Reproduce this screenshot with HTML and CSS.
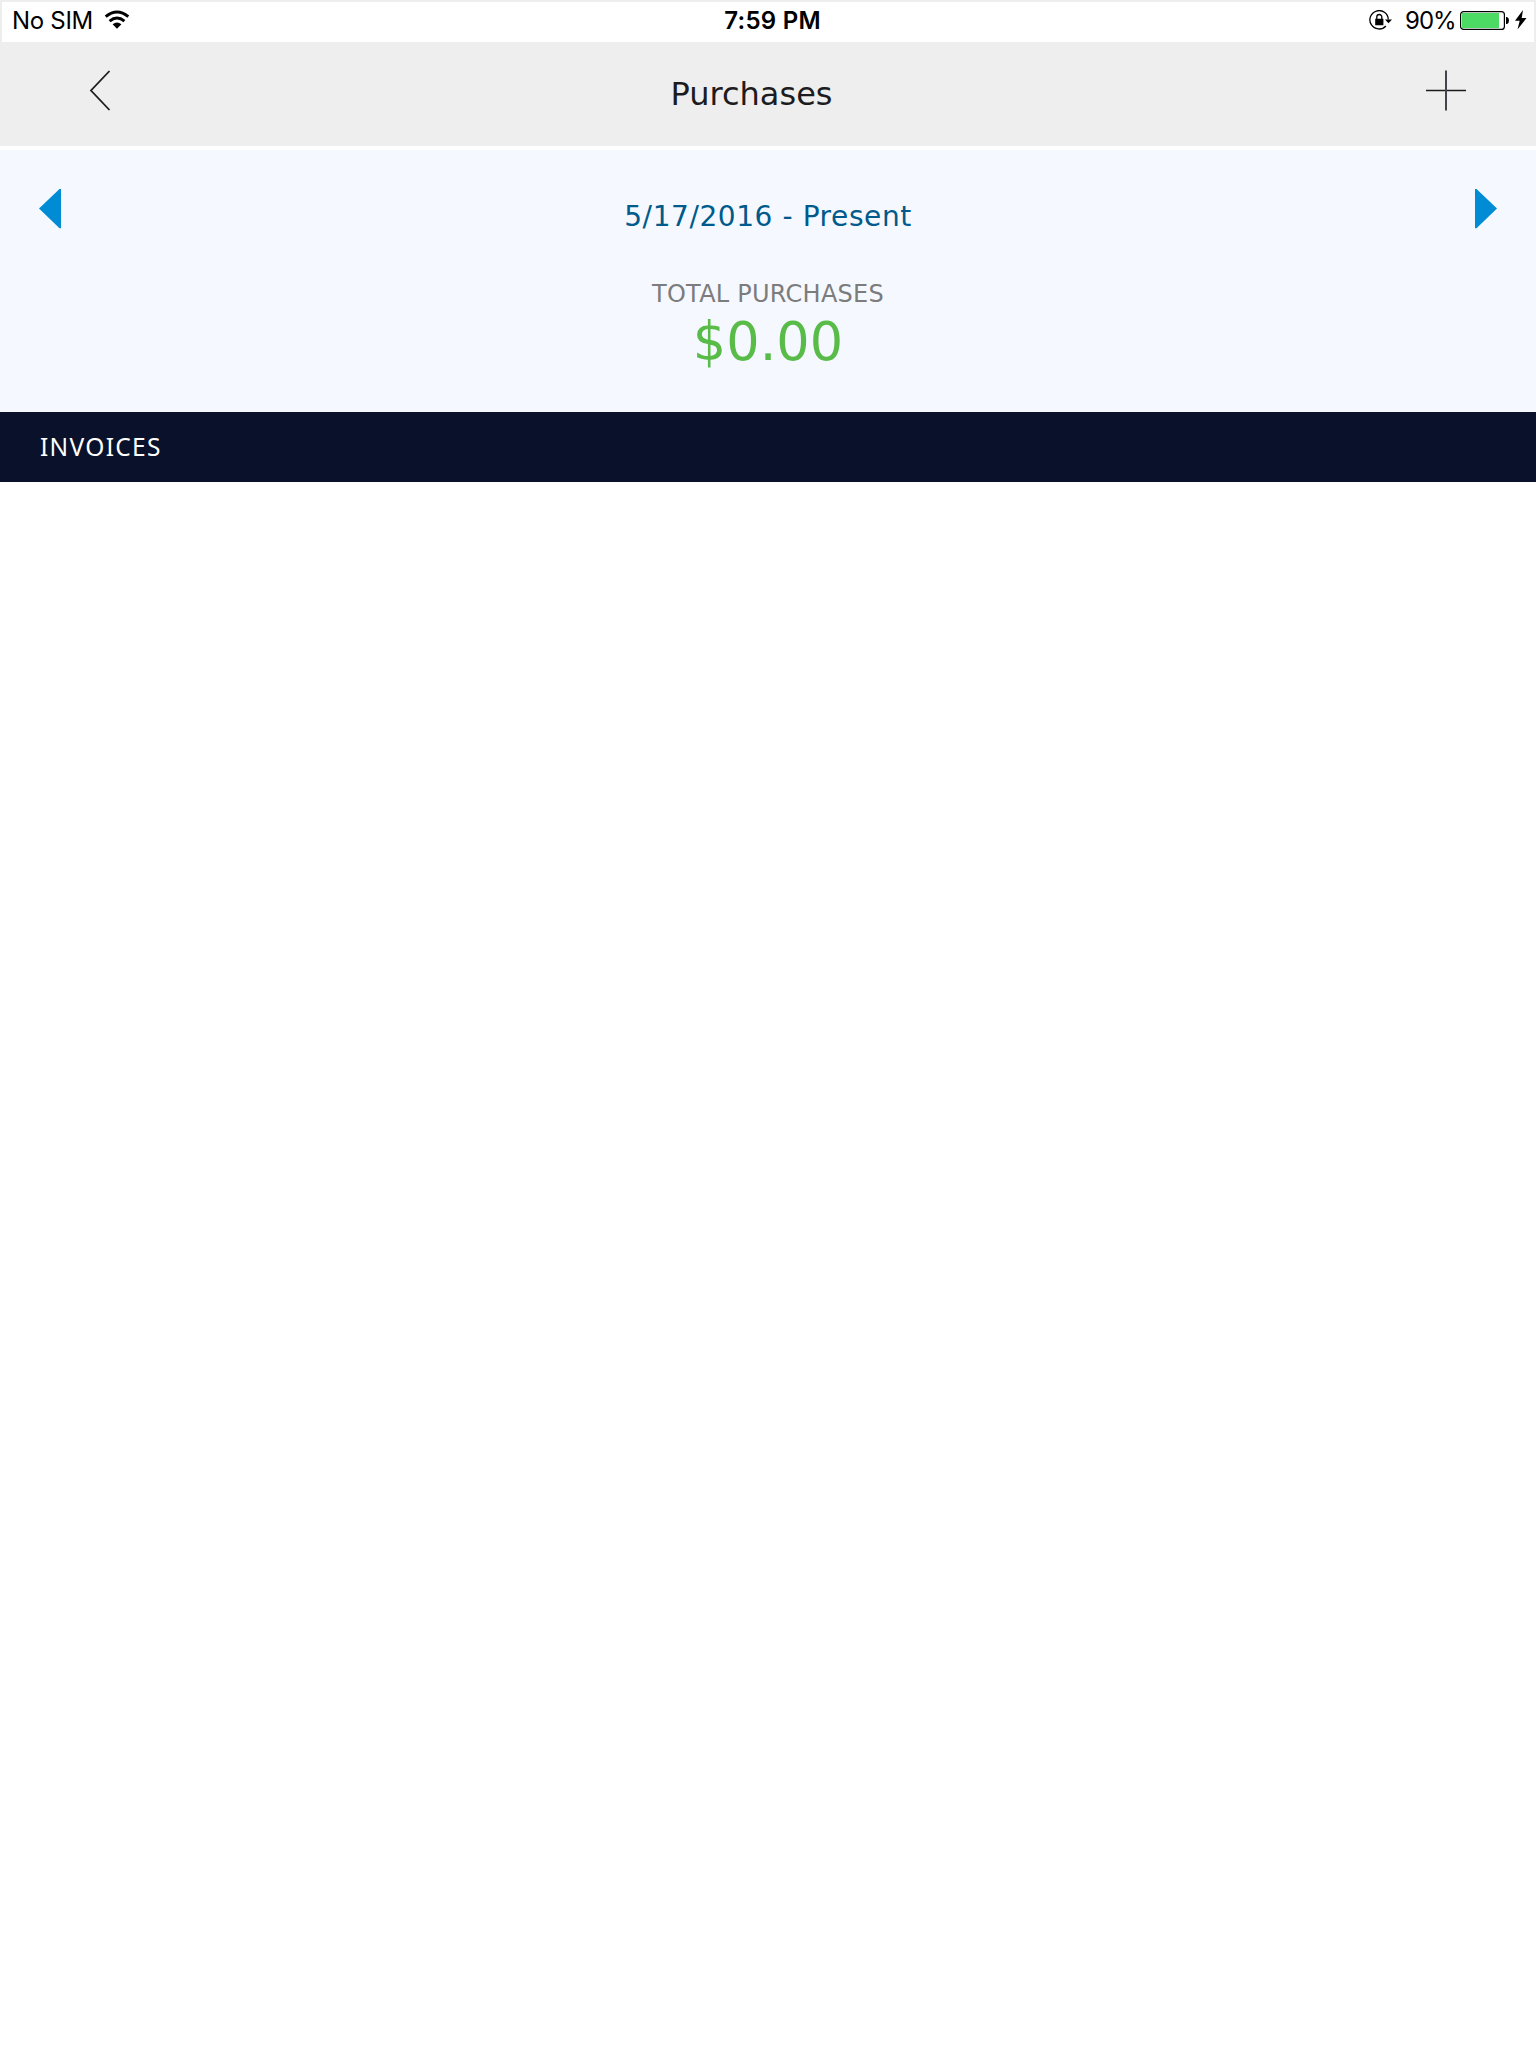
FILE: index.html
```html
<!DOCTYPE html>
<html lang="en">
<head>
<meta charset="utf-8">
<title>Purchases</title>
<link rel="stylesheet" href="styles.css">
</head>
<body>
<div class="status">
  <div class="status-left">
    <span class="carrier">No SIM</span>
    <svg class="wifi" width="26" height="20" viewBox="0 0 26 20"><path d="M1.7 6.7Q13-2.7 24.3 6.7M5.6 11.1Q13 5 20.4 11.1" fill="none" stroke="#000" stroke-width="2.9"/><path d="M8.6 14.3Q13 10.8 17.4 14.3L13 18.7Z"/></svg>
  </div>
  <span class="time">7:59 PM</span>
  <div class="status-right">
    <svg class="lock" width="24" height="20" viewBox="0 0 24 20"><path d="M16.9 16A9.2 9.2 0 1 1 19.3 9.5" fill="none" stroke="#000" stroke-width="1.3"/><path d="M16 9.5h7l-3.5 3.7zM6.2 8.8h8.2v6.4H6.2z"/><path d="M7.8 9V7a2.5 2.5 0 0 1 5 0v2" fill="none" stroke="#000" stroke-width="1.3"/></svg>
    <span class="percent">90%</span>
    <svg class="battery" width="50" height="20" viewBox="0 0 50 20"><rect x=".6" y=".6" width="43.8" height="17.8" rx="3" fill="#fff" stroke="#000" stroke-width="1.2"/><path d="M2 2h37v15H2z" fill="#4cd964"/><path d="M46 6h1q2 .6 2 3.5t-2 3.5h-1z"/></svg>
    <svg class="bolt" width="12" height="20" viewBox="0 0 12 20"><path d="M8 0 0 10.8h4.7L2.5 19.5 11.5 8H6.7z"/></svg>
  </div>
</div>
<header class="nav">
  <svg class="back" width="22" height="42" viewBox="0 0 22 42"><path d="M20.5 1 2 20.5 20.5 40" fill="none" stroke="#1c1c20" stroke-width="1.8"/></svg>
  <h1 class="title">Purchases</h1>
  <svg class="add" width="40" height="41" viewBox="0 0 40 41"><path d="M0 20.5h40" stroke="#1c1c20" stroke-width="1.6"/><path d="M20 .5v40" stroke="#44444a" stroke-width="2"/></svg>
</header>
<section class="summary">
  <svg class="arrow" width="22" height="40" viewBox="0 0 22 40"><path d="M22 0v39.2h-1.5L0 19.6 20.5 0z" fill="#008cd4"/></svg>
  <div class="totals">
    <div class="range">5/17/2016 - Present</div>
    <div class="label">TOTAL PURCHASES</div>
    <div class="amount">$0.00</div>
  </div>
  <svg class="arrow" width="22" height="40" viewBox="0 0 22 40"><path d="M0 0v39.2h1.5L22 19.6 1.5 0z" fill="#008cd4"/></svg>
</section>
<h2 class="section-bar">INVOICES</h2>
</body>
</html>
```
FILE: styles.css
```css
* { box-sizing: border-box; }
body {
  margin: 0;
  min-height: 2048px;
  background: #fff;
  font-family: "DejaVu Sans", sans-serif;
}
svg { display: block; flex: none; }
.status {
  display: grid;
  grid-template-columns: 1fr auto 1fr;
  height: 42px;
  padding: 0 7px 0 10px;
  border: 2px solid #eee;
  border-bottom: 0;
  font: 24px/38px Inter, sans-serif;
  color: #000;
}
.status-left, .status-right { display: flex; }
.status-right { justify-content: flex-end; }
.carrier { width: 92px; letter-spacing: -.3px; white-space: nowrap; }
.wifi { margin-top: 8px; }
.time { font-weight: 600; padding-left: 6px; letter-spacing: .25px; }
.lock { margin: 8px 12px 0 0; }
.percent { width: 55px; letter-spacing: -1px; white-space: nowrap; }
.battery { margin: 9px 5px 0 0; }
.bolt { margin-top: 8px; }
.nav {
  display: grid;
  grid-template-columns: 22px 1fr 40px;
  height: 104px;
  padding: 28px 70px 0 89px;
  background: #eee;
}
.title {
  margin: 0;
  padding-right: 34px;
  text-align: center;
  font-size: 32px;
  font-weight: 400;
  line-height: 48px;
  color: #1c1c20;
}
.summary {
  display: flex;
  justify-content: space-between;
  height: 262px;
  margin-top: 4px;
  padding: 39px 39px 0;
  background: #f5f9ff;
  text-align: center;
}
.range { margin-top: 8px; font-size: 28px; line-height: 40px; letter-spacing: .58px; color: #005a8b; }
.label { margin-top: 39px; font-size: 24px; line-height: 36px; letter-spacing: .25px; color: #7c7c7c; }
.amount { font-size: 52.5px; line-height: 60px; color: #59bc49; }
.section-bar {
  height: 70px;
  margin: 0;
  padding-left: 40px;
  background: #0a112a;
  color: #fff;
  font: 24.5px/70px "Noto Sans", sans-serif;
  letter-spacing: 1.3px;
}
```
